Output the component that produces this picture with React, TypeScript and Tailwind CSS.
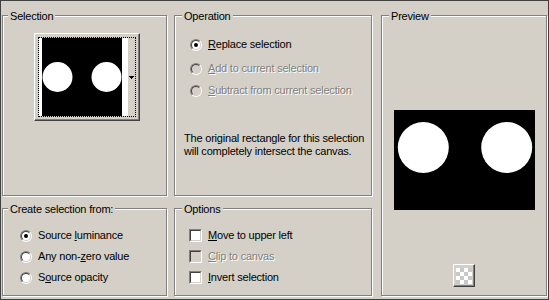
import type { ReactNode } from "react";

const etched =
  "relative border border-[#808080] shadow-[inset_1px_1px_0_#fff,1px_1px_0_#fff]";
const raised =
  "border border-t-white border-l-white border-r-[#404040] border-b-[#404040] shadow-[inset_-1px_-1px_0_#808080]";

function GroupBox({
  title,
  titleClass,
  className,
  children,
}: {
  title: string;
  titleClass: string;
  className: string;
  children?: ReactNode;
}) {
  return (
    <div className={`${etched} ${className}`}>
      <span
        className={`absolute top-[-6px] bg-[#d4d0c8] px-[2px] leading-[13px] ${titleClass}`}
      >
        {title}
      </span>
      {children}
    </div>
  );
}

function Radio({ checked, disabled }: { checked?: boolean; disabled?: boolean }) {
  return (
    <span className="w-[12px] h-[12px] shrink-0 rounded-full border border-t-[#808080] border-l-[#808080] border-r-white border-b-white">
      <span
        className={`flex items-center justify-center w-full h-full rounded-full border border-t-[#404040] border-l-[#404040] border-r-[#d4d0c8] border-b-[#d4d0c8] ${
          disabled ? "bg-[#d4d0c8]" : "bg-white"
        }`}
      >
        {checked && <span className="w-[4px] h-[4px] rounded-full bg-black" />}
      </span>
    </span>
  );
}

function Checkbox({ disabled }: { disabled?: boolean }) {
  return (
    <span className="w-[13px] h-[13px] shrink-0 border border-t-[#808080] border-l-[#808080] border-r-white border-b-white">
      <span
        className={`block w-full h-full border border-t-[#404040] border-l-[#404040] border-r-[#d4d0c8] border-b-[#d4d0c8] ${
          disabled ? "bg-[#d4d0c8]" : "bg-white"
        }`}
      />
    </span>
  );
}

function Label({ disabled, children }: { disabled?: boolean; children: ReactNode }) {
  return (
    <span
      className={`leading-[13px] whitespace-nowrap ${
        disabled ? "text-[#808080] [text-shadow:1px_1px_0_#fff]" : "text-black"
      }`}
    >
      {children}
    </span>
  );
}

function Circles({ w, h, r, cx1, cx2, cy }: { w: number; h: number; r: number; cx1: number; cx2: number; cy: number }) {
  return (
    <svg width={w} height={h} className="block">
      <rect width={w} height={h} fill="#000" />
      <circle cx={cx1} cy={cy} r={r} fill="#fff" />
      <circle cx={cx2} cy={cy} r={r} fill="#fff" />
    </svg>
  );
}

export default function App() {
  return (
    <div className="w-[549px] h-[300px] bg-[#d4d0c8] border border-[#404040] pt-[14px] pl-[1px] flex font-['Liberation_Sans',Arial,sans-serif] text-[11px] tracking-[-0.2px] text-black">
      {/* left column */}
      <div className="flex flex-col gap-[12px] w-[165px]">
        <GroupBox title="Selection" titleClass="left-[5px]" className="h-[181px]">
          <div className={`${raised} ml-[31px] mt-[17px] w-[106px] h-[88px] p-[3px]`}>
            <div className="h-full border border-dotted border-black flex">
              <div className="bg-white pl-[3px] pr-[6px]">
                <Circles w={80} h={78} r={15} cx1={15.5} cx2={64.5} cy={39} />
              </div>
              <div className="flex-1 flex items-center justify-center">
                <svg width="5" height="3" shapeRendering="crispEdges">
                  <rect x="0" y="0" width="5" height="1" fill="#000" />
                  <rect x="1" y="1" width="3" height="1" fill="#000" />
                  <rect x="2" y="2" width="1" height="1" fill="#000" />
                </svg>
              </div>
            </div>
          </div>
        </GroupBox>
        <GroupBox title="Create selection from:" titleClass="left-[5px]" className="h-[88px]">
          <div className="flex flex-col gap-[8px] pt-[20px] pl-[17px]">
            <div className="flex items-center gap-[6px] h-[13px]">
              <Radio checked />
              <Label>
                Source <u>l</u>uminance
              </Label>
            </div>
            <div className="flex items-center gap-[6px] h-[13px]">
              <Radio />
              <Label>
                Any non-<u>z</u>ero value
              </Label>
            </div>
            <div className="flex items-center gap-[6px] h-[13px]">
              <Radio />
              <Label>
                S<u>o</u>urce opacity
              </Label>
            </div>
          </div>
        </GroupBox>
      </div>

      {/* middle column */}
      <div className="flex flex-col gap-[12px] w-[198px] ml-[7px]">
        <GroupBox title="Operation" titleClass="left-[7px]" className="h-[181px]">
          <div className="flex flex-col pl-[15px]">
            <div className="flex items-center gap-[6px] h-[13px] mt-[22px]">
              <Radio checked />
              <Label>
                <u>R</u>eplace selection
              </Label>
            </div>
            <div className="flex items-center gap-[6px] h-[13px] mt-[11px]">
              <Radio disabled />
              <Label disabled>
                <u>A</u>dd to current selection
              </Label>
            </div>
            <div className="flex items-center gap-[6px] h-[13px] mt-[9px]">
              <Radio disabled />
              <Label disabled>
                <u>S</u>ubtract from current selection
              </Label>
            </div>
          </div>
          <p className="ml-[9px] mt-[35px] leading-[13px]">
            The original rectangle for this selection
            <br />
            will completely intersect the canvas.
          </p>
        </GroupBox>
        <GroupBox title="Options" titleClass="left-[7px]" className="h-[88px]">
          <div className="flex flex-col gap-[8px] pt-[20px] pl-[14px]">
            <div className="flex items-center gap-[6px] h-[13px]">
              <Checkbox />
              <Label>
                <u>M</u>ove to upper left
              </Label>
            </div>
            <div className="flex items-center gap-[6px] h-[13px]">
              <Checkbox disabled />
              <Label disabled>
                <u>C</u>lip to canvas
              </Label>
            </div>
            <div className="flex items-center gap-[6px] h-[13px]">
              <Checkbox />
              <Label>
                <u>I</u>nvert selection
              </Label>
            </div>
          </div>
        </GroupBox>
      </div>

      {/* preview column */}
      <div className="w-[166px] ml-[9px]">
        <GroupBox title="Preview" titleClass="left-[7px]" className="h-[281px] flex flex-col items-center">
          <div className="mt-[94px] pl-[1px]">
            <Circles w={141} h={100} r={25.5} cx1={29.3} cx2={112.7} cy={37.5} />
          </div>
          <div className={`${raised} mt-[54px] w-[22px] h-[23px] flex items-center justify-center`}>
            <svg width="16" height="16" shapeRendering="crispEdges">
              <rect width="16" height="16" fill="#fff" />
              <rect x="4" y="0" width="4" height="4" fill="#c8c8c8" />
              <rect x="12" y="0" width="4" height="4" fill="#c8c8c8" />
              <rect x="0" y="4" width="4" height="4" fill="#c8c8c8" />
              <rect x="8" y="4" width="4" height="4" fill="#c8c8c8" />
              <rect x="4" y="8" width="4" height="4" fill="#c8c8c8" />
              <rect x="12" y="8" width="4" height="4" fill="#c8c8c8" />
              <rect x="0" y="12" width="4" height="4" fill="#c8c8c8" />
              <rect x="8" y="12" width="4" height="4" fill="#c8c8c8" />
            </svg>
          </div>
        </GroupBox>
      </div>
    </div>
  );
}
